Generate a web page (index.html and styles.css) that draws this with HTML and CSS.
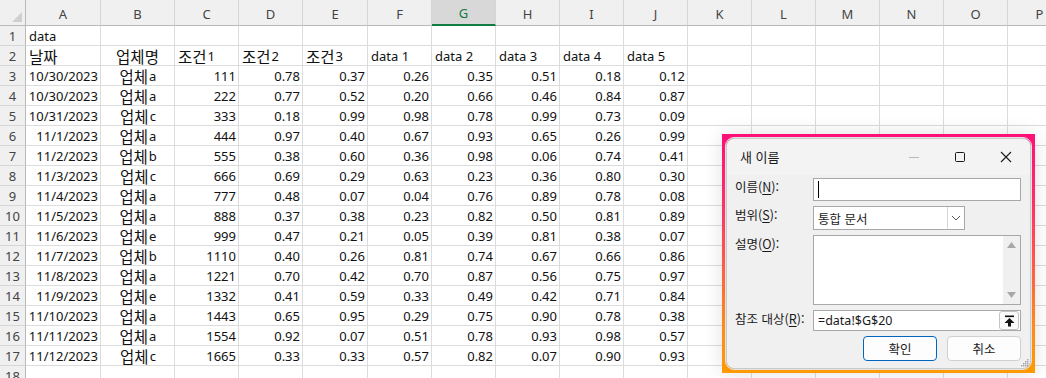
FILE: index.html
```html
<!DOCTYPE html>
<html lang="ko">
<head>
<meta charset="utf-8">
<title>새 이름</title>
<link rel="stylesheet" href="styles.css">
</head>
<body>
<div class="sheet">
  <div class="grid">
    <div class="hd corner"><span class="tri"></span></div>
    <div class="hd">A</div><div class="hd">B</div><div class="hd">C</div><div class="hd">D</div><div class="hd">E</div><div class="hd">F</div><div class="hd sel">G</div><div class="hd">H</div><div class="hd">I</div><div class="hd">J</div><div class="hd">K</div><div class="hd">L</div><div class="hd">M</div><div class="hd">N</div><div class="hd">O</div><div class="hd">P</div>

    <div class="rn">1</div><div class="c l">data</div><div class="c"></div><div class="c"></div><div class="c"></div><div class="c"></div><div class="c"></div><div class="c"></div><div class="c"></div><div class="c"></div><div class="c"></div><div class="c"></div><div class="c"></div><div class="c"></div><div class="c"></div><div class="c"></div><div class="c"></div>

    <div class="rn">2</div><div class="c l"><span class="ko">날짜</span></div><div class="c m"><span class="ko">업체명</span></div><div class="c l"><span class="ko">조건</span>1</div><div class="c l"><span class="ko">조건</span>2</div><div class="c l"><span class="ko">조건</span>3</div><div class="c l">data 1</div><div class="c l">data 2</div><div class="c l">data 3</div><div class="c l">data 4</div><div class="c l">data 5</div><div class="c"></div><div class="c"></div><div class="c"></div><div class="c"></div><div class="c"></div><div class="c"></div>

    <div class="rn">3</div><div class="c">10/30/2023</div><div class="c m"><span class="ko">업체</span>a</div><div class="c">111</div><div class="c">0.78</div><div class="c">0.37</div><div class="c">0.26</div><div class="c">0.35</div><div class="c">0.51</div><div class="c">0.18</div><div class="c">0.12</div><div class="c"></div><div class="c"></div><div class="c"></div><div class="c"></div><div class="c"></div><div class="c"></div>

    <div class="rn">4</div><div class="c">10/30/2023</div><div class="c m"><span class="ko">업체</span>a</div><div class="c">222</div><div class="c">0.77</div><div class="c">0.52</div><div class="c">0.20</div><div class="c">0.66</div><div class="c">0.46</div><div class="c">0.84</div><div class="c">0.87</div><div class="c"></div><div class="c"></div><div class="c"></div><div class="c"></div><div class="c"></div><div class="c"></div>

    <div class="rn">5</div><div class="c">10/31/2023</div><div class="c m"><span class="ko">업체</span>c</div><div class="c">333</div><div class="c">0.18</div><div class="c">0.99</div><div class="c">0.98</div><div class="c">0.78</div><div class="c">0.99</div><div class="c">0.73</div><div class="c">0.09</div><div class="c"></div><div class="c"></div><div class="c"></div><div class="c"></div><div class="c"></div><div class="c"></div>

    <div class="rn">6</div><div class="c">11/1/2023</div><div class="c m"><span class="ko">업체</span>a</div><div class="c">444</div><div class="c">0.97</div><div class="c">0.40</div><div class="c">0.67</div><div class="c">0.93</div><div class="c">0.65</div><div class="c">0.26</div><div class="c">0.99</div><div class="c"></div><div class="c"></div><div class="c"></div><div class="c"></div><div class="c"></div><div class="c"></div>

    <div class="rn">7</div><div class="c">11/2/2023</div><div class="c m"><span class="ko">업체</span>b</div><div class="c">555</div><div class="c">0.38</div><div class="c">0.60</div><div class="c">0.36</div><div class="c">0.98</div><div class="c">0.06</div><div class="c">0.74</div><div class="c">0.41</div><div class="c"></div><div class="c"></div><div class="c"></div><div class="c"></div><div class="c"></div><div class="c"></div>

    <div class="rn">8</div><div class="c">11/3/2023</div><div class="c m"><span class="ko">업체</span>c</div><div class="c">666</div><div class="c">0.69</div><div class="c">0.29</div><div class="c">0.63</div><div class="c">0.23</div><div class="c">0.36</div><div class="c">0.80</div><div class="c">0.30</div><div class="c"></div><div class="c"></div><div class="c"></div><div class="c"></div><div class="c"></div><div class="c"></div>

    <div class="rn">9</div><div class="c">11/4/2023</div><div class="c m"><span class="ko">업체</span>a</div><div class="c">777</div><div class="c">0.48</div><div class="c">0.07</div><div class="c">0.04</div><div class="c">0.76</div><div class="c">0.89</div><div class="c">0.78</div><div class="c">0.08</div><div class="c"></div><div class="c"></div><div class="c"></div><div class="c"></div><div class="c"></div><div class="c"></div>

    <div class="rn">10</div><div class="c">11/5/2023</div><div class="c m"><span class="ko">업체</span>a</div><div class="c">888</div><div class="c">0.37</div><div class="c">0.38</div><div class="c">0.23</div><div class="c">0.82</div><div class="c">0.50</div><div class="c">0.81</div><div class="c">0.89</div><div class="c"></div><div class="c"></div><div class="c"></div><div class="c"></div><div class="c"></div><div class="c"></div>

    <div class="rn">11</div><div class="c">11/6/2023</div><div class="c m"><span class="ko">업체</span>e</div><div class="c">999</div><div class="c">0.47</div><div class="c">0.21</div><div class="c">0.05</div><div class="c">0.39</div><div class="c">0.81</div><div class="c">0.38</div><div class="c">0.07</div><div class="c"></div><div class="c"></div><div class="c"></div><div class="c"></div><div class="c"></div><div class="c"></div>

    <div class="rn">12</div><div class="c">11/7/2023</div><div class="c m"><span class="ko">업체</span>b</div><div class="c">1110</div><div class="c">0.40</div><div class="c">0.26</div><div class="c">0.81</div><div class="c">0.74</div><div class="c">0.67</div><div class="c">0.66</div><div class="c">0.86</div><div class="c"></div><div class="c"></div><div class="c"></div><div class="c"></div><div class="c"></div><div class="c"></div>

    <div class="rn">13</div><div class="c">11/8/2023</div><div class="c m"><span class="ko">업체</span>a</div><div class="c">1221</div><div class="c">0.70</div><div class="c">0.42</div><div class="c">0.70</div><div class="c">0.87</div><div class="c">0.56</div><div class="c">0.75</div><div class="c">0.97</div><div class="c"></div><div class="c"></div><div class="c"></div><div class="c"></div><div class="c"></div><div class="c"></div>

    <div class="rn">14</div><div class="c">11/9/2023</div><div class="c m"><span class="ko">업체</span>e</div><div class="c">1332</div><div class="c">0.41</div><div class="c">0.59</div><div class="c">0.33</div><div class="c">0.49</div><div class="c">0.42</div><div class="c">0.71</div><div class="c">0.84</div><div class="c"></div><div class="c"></div><div class="c"></div><div class="c"></div><div class="c"></div><div class="c"></div>

    <div class="rn">15</div><div class="c">11/10/2023</div><div class="c m"><span class="ko">업체</span>a</div><div class="c">1443</div><div class="c">0.65</div><div class="c">0.95</div><div class="c">0.29</div><div class="c">0.75</div><div class="c">0.90</div><div class="c">0.78</div><div class="c">0.38</div><div class="c"></div><div class="c"></div><div class="c"></div><div class="c"></div><div class="c"></div><div class="c"></div>

    <div class="rn">16</div><div class="c">11/11/2023</div><div class="c m"><span class="ko">업체</span>a</div><div class="c">1554</div><div class="c">0.92</div><div class="c">0.07</div><div class="c">0.51</div><div class="c">0.78</div><div class="c">0.93</div><div class="c">0.98</div><div class="c">0.57</div><div class="c"></div><div class="c"></div><div class="c"></div><div class="c"></div><div class="c"></div><div class="c"></div>

    <div class="rn">17</div><div class="c">11/12/2023</div><div class="c m"><span class="ko">업체</span>c</div><div class="c">1665</div><div class="c">0.33</div><div class="c">0.33</div><div class="c">0.57</div><div class="c">0.82</div><div class="c">0.07</div><div class="c">0.90</div><div class="c">0.93</div><div class="c"></div><div class="c"></div><div class="c"></div><div class="c"></div><div class="c"></div><div class="c"></div>

    <div class="rn">18</div><div class="c"></div><div class="c"></div><div class="c"></div><div class="c"></div><div class="c"></div><div class="c"></div><div class="c"></div><div class="c"></div><div class="c"></div><div class="c"></div><div class="c"></div><div class="c"></div><div class="c"></div><div class="c"></div><div class="c"></div><div class="c"></div>
  </div>

  <div class="frame">
    <div class="dialog">
      <div class="titlebar">
        <span class="title">새 이름</span>
        <div class="controls">
          <svg class="ctl" width="12" height="12" viewBox="0 0 12 12"><line x1="1" y1="6.5" x2="11" y2="6.5" stroke="#b8b8b8" stroke-width="1"/></svg>
          <svg class="ctl" width="12" height="12" viewBox="0 0 12 12"><rect x="1.5" y="1.5" width="9" height="9" rx="1" fill="none" stroke="#1a1a1a" stroke-width="1"/></svg>
          <svg class="ctl" width="12" height="12" viewBox="0 0 12 12"><path d="M1 1 L11 11 M11 1 L1 11" stroke="#1a1a1a" stroke-width="1.1"/></svg>
        </div>
      </div>
      <div class="form">
        <label class="lbl">이름(<u>N</u>):</label>
        <div class="field"><span class="caret"></span></div>

        <label class="lbl">범위(<u>S</u>):</label>
        <div class="select">
          <span class="sel-text">통합 문서</span>
          <span class="drop"><svg width="10" height="6" viewBox="0 0 10 6"><path d="M1 1 L5 5 L9 1" fill="none" stroke="#555" stroke-width="1"/></svg></span>
        </div>

        <label class="lbl">설명(<u>O</u>):</label>
        <div class="area">
          <div class="scroll">
            <svg width="9" height="6" viewBox="0 0 9 6"><path d="M0 6 L4.5 0 L9 6 Z" fill="#a8a8a8"/></svg>
            <svg width="9" height="6" viewBox="0 0 9 6"><path d="M0 0 L4.5 6 L9 0 Z" fill="#a8a8a8"/></svg>
          </div>
        </div>

        <label class="lbl">참조 대상(<u>R</u>):</label>
        <div class="field ref">
          <span class="ref-text">=data!$G$20</span>
          <span class="refbtn"><svg width="11" height="12" viewBox="0 0 11 12"><rect x="1" y="0.5" width="9" height="1.6" fill="#111"/><path d="M0.5 8 L5.5 3 L10.5 8 Z" fill="#111"/><rect x="4" y="7.5" width="3" height="4" fill="#111"/></svg></span>
        </div>

        <div class="buttons">
          <button class="btn primary">확인</button>
          <button class="btn">취소</button>
        </div>
      </div>
      <svg class="grip" width="10" height="10" viewBox="0 0 10 10"><g fill="#a0a0a0"><rect x="8" y="2" width="1.4" height="1.4"/><rect x="6" y="4" width="1.4" height="1.4"/><rect x="8" y="4" width="1.4" height="1.4"/><rect x="4" y="6" width="1.4" height="1.4"/><rect x="6" y="6" width="1.4" height="1.4"/><rect x="8" y="6" width="1.4" height="1.4"/><rect x="2" y="8" width="1.4" height="1.4"/><rect x="4" y="8" width="1.4" height="1.4"/><rect x="6" y="8" width="1.4" height="1.4"/><rect x="8" y="8" width="1.4" height="1.4"/></g></svg>
    </div>
  </div>
</div>
</body>
</html>
```

FILE: styles.css
```css
html, body {
  margin: 0;
  padding: 0;
  background: #ffffff;
  overflow: hidden;
}

.sheet {
  position: relative;
  width: 1046px;
  height: 378px;
  overflow: hidden;
  font-family: "Noto Sans", "Noto Sans CJK KR", sans-serif;
  font-size: 13px;
  color: #111;
}

.grid {
  display: grid;
  grid-template-columns: 26px 75px 74px 64px 64px 65px repeat(11, 64px);
  grid-template-rows: 26px repeat(18, 20px);
}

.hd {
  box-sizing: border-box;
  background: #f0f0f0;
  border-right: 1px solid #d6d6d6;
  border-bottom: 1px solid #b9b9b9;
  display: flex;
  align-items: center;
  justify-content: center;
  color: #444;
  font-size: 13px;
  padding-top: 2px;
}

.hd.sel {
  background: #d8d8d8;
  color: #107c41;
  border-bottom: 2px solid #107c41;
}

.corner {
  position: relative;
  border-right: 1px solid #b9b9b9;
}

.tri {
  position: absolute;
  right: 3px;
  bottom: 3px;
  width: 0;
  height: 0;
  border-left: 10px solid transparent;
  border-bottom: 10px solid #cfcfcf;
}

.rn {
  box-sizing: border-box;
  background: #f0f0f0;
  border-right: 1px solid #b9b9b9;
  border-bottom: 1px solid #d6d6d6;
  display: flex;
  align-items: flex-end;
  justify-content: center;
  color: #444;
  font-size: 13px;
  line-height: 18px;
}

.c {
  box-sizing: border-box;
  border-right: 1px solid #dcdcdc;
  border-bottom: 1px solid #dcdcdc;
  display: flex;
  align-items: flex-end;
  justify-content: flex-end;
  padding: 0 2px 0 3px;
  line-height: 17px;
  white-space: nowrap;
  overflow: visible;
}

.c.l { justify-content: flex-start; }
.c.m { justify-content: center; }

.ko {
  font-family: "Noto Sans CJK KR", sans-serif;
  font-size: 15.5px;
  line-height: 18px;
  margin-right: 1px;
}

/* Dialog */
.frame {
  position: absolute;
  left: 722px;
  top: 134px;
  width: 313px;
  height: 239px;
  box-sizing: border-box;
  padding: 4px;
  background: linear-gradient(180deg, #ff0f78 0%, #ff2a6a 25%, #ff5a48 55%, #ff8a1a 80%, #ff9a00 100%);
  box-shadow: 0 0 18px rgba(0, 0, 0, 0.12);
}

.dialog {
  position: relative;
  box-sizing: border-box;
  height: 100%;
  background: #f0f0f0;
  border: 1px solid #c9c9c9;
  border-radius: 8px;
  font-family: "Noto Sans CJK KR", "Noto Sans", sans-serif;
  font-size: 12px;
  color: #1a1a1a;
  display: flex;
  flex-direction: column;
  outline: 1px solid #e4e4e4;
}

.titlebar {
  height: 36px;
  background: #f3f3f3;
  border-radius: 8px 8px 0 0;
  display: flex;
  align-items: center;
  justify-content: space-between;
  padding: 0 0 0 13px;
  flex: none;
}

.title {
  font-size: 13px;
  margin-top: -2px;
}

.controls {
  display: flex;
  align-items: center;
  gap: 34px;
  padding-right: 18px;
}

.ctl { display: block; }

.form {
  display: grid;
  grid-template-columns: 78px 208px;
  grid-template-rows: 23px 24px 70px 21px 25px;
  row-gap: 5px;
  padding: 3px 0 0 8px;
}

.lbl {
  font-size: 12.5px;
  line-height: 18px;
  white-space: nowrap;
}

.lbl u { text-decoration-thickness: 1px; text-underline-offset: 2px; }

.field {
  box-sizing: border-box;
  background: #fff;
  border: 1px solid #a8a8a8;
  display: flex;
  align-items: center;
  padding-left: 4px;
}

.caret {
  width: 1px;
  height: 17px;
  background: #000;
}

.select {
  box-sizing: border-box;
  width: 152px;
  background: #fff;
  border: 1px solid #a8a8a8;
  display: flex;
  align-items: center;
  justify-content: space-between;
}

.sel-text {
  padding-left: 4px;
  font-size: 12.5px;
}

.drop {
  box-sizing: border-box;
  width: 17px;
  height: 100%;
  border-left: 1px solid #d6d6d6;
  display: flex;
  align-items: center;
  justify-content: center;
}

.area {
  box-sizing: border-box;
  background: #fff;
  border: 1px solid #a8a8a8;
  display: flex;
  justify-content: flex-end;
}

.scroll {
  width: 17px;
  background: #f0f0f0;
  display: flex;
  flex-direction: column;
  justify-content: space-between;
  align-items: center;
  padding: 6px 0 6px;
  box-sizing: border-box;
}

.ref {
  justify-content: space-between;
  padding-right: 1px;
}

.ref-text {
  font-family: "Noto Sans", sans-serif;
  font-size: 12.5px;
}

.refbtn {
  box-sizing: border-box;
  width: 20px;
  height: 19px;
  border: 1px solid #c4c4c4;
  border-radius: 3px;
  background: #fbfbfb;
  display: flex;
  align-items: center;
  justify-content: center;
}

.buttons {
  grid-column: 1 / 3;
  display: flex;
  justify-content: flex-end;
  gap: 10px;
}

.btn {
  box-sizing: border-box;
  width: 74px;
  height: 25px;
  border: 1px solid #d0d0d0;
  border-radius: 4px;
  background: #fdfdfd;
  font-family: "Noto Sans CJK KR", sans-serif;
  font-size: 12.5px;
  color: #1a1a1a;
  padding: 0;
}

.btn.primary {
  border: 1px solid #0067c0;
}

.grip {
  position: absolute;
  right: 1px;
  bottom: 1px;
}
```
